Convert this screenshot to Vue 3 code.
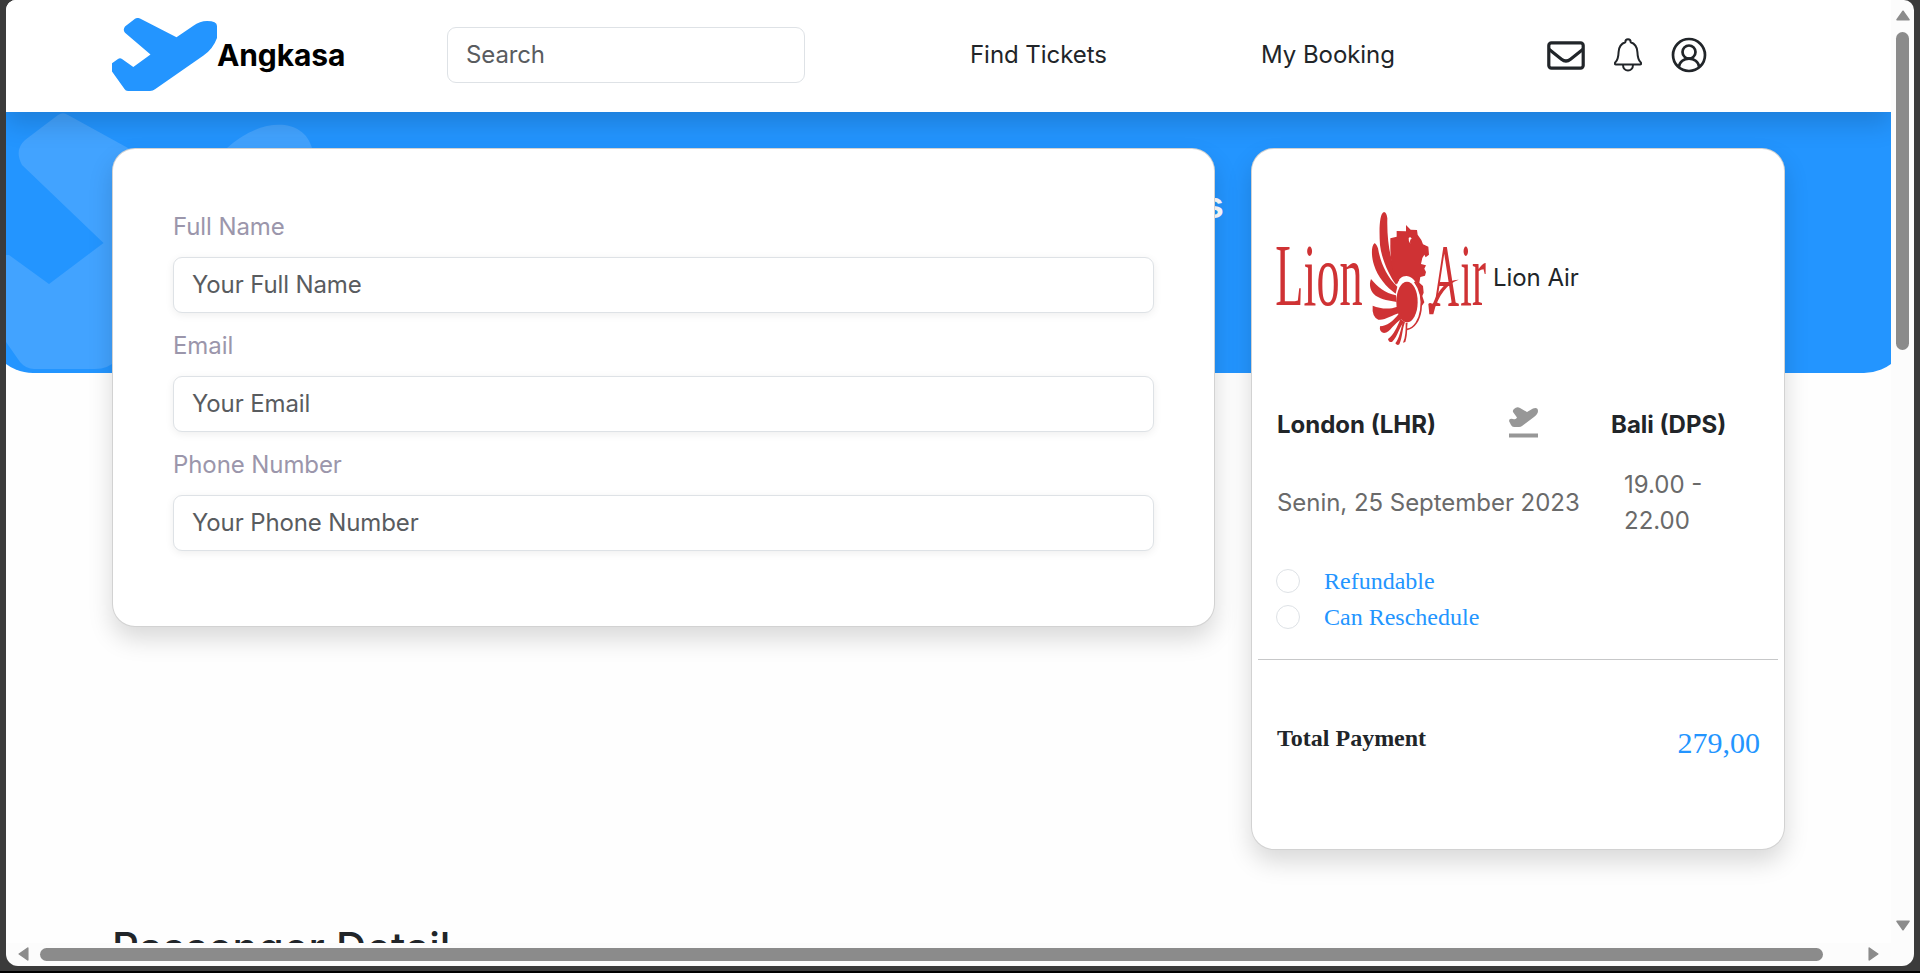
<script setup>
const links = ['Find Tickets', 'My Booking']
const fields = [
  { label: 'Full Name', hint: 'Your Full Name' },
  { label: 'Email', hint: 'Your Email' },
  { label: 'Phone Number', hint: 'Your Phone Number' }
]
const perks = ['Refundable', 'Can Reschedule']
</script>

<template>
  <div class="desktop">
    <div class="window">
      <div class="view">
        <nav class="navbar">
          <svg class="logo" viewBox="112 18 105 73">
            <path fill="#2395ff" d="M135 18.8Q137.7 17.2 140 18.6L176.5 37.3 193 26Q200 21 207 21 217 21 217 26V38Q213 49 203.5 55.5L155 89.3Q153 90.9 150 90.9H128Q125.5 90.9 124.5 89L112 71.5V63.3L118 59Q120 57.5 122 59L133.3 67 150.5 54.6 125 32.8Q122.5 30 125 26.5Z" />
          </svg>
          <span class="brand">Angkasa</span>
          <input class="control search" placeholder="Search" />
          <a v-for="l in links" :key="l" class="link">{{ l }}</a>
          <div class="icons">
            <svg class="mail" viewBox="0 0 38 29" fill="none" stroke="#212529" stroke-width="3.2">
              <rect x="1.8" y="1.8" width="34.4" height="25.4" rx="2.6" />
              <path d="M2 8.2 14.5 18.2Q19 21.8 23.5 18.2L36 8.2" />
            </svg>
            <svg class="bell" viewBox="0 0 28 34" fill="none" stroke="#212529" stroke-width="2" stroke-linejoin="round">
              <path d="M11.3 4.3C11.3 .2 16.7 .2 16.7 4.3 21.5 6 23.2 9.5 23.4 14 23.6 19.5 24.5 22.5 26.8 24.6 27.6 26 27 26.5 26 26.5H2C1 26.5 .4 26 1.2 24.6 3.5 22.5 4.4 19.5 4.6 14 4.8 9.5 6.5 6 11.3 4.3Z" />
              <path d="M9 26.8C9 34.4 19 34.4 19 26.8" />
            </svg>
            <svg class="user" viewBox="0 0 36 36" fill="none" stroke="#212529" stroke-width="2.7">
              <circle cx="18" cy="18" r="16" />
              <circle cx="18" cy="15" r="6.5" />
              <path d="M7.8 30.2C9 18.8 27 18.8 28.2 30.2" />
            </svg>
          </div>
        </nav>

        <div class="banner">
          <svg class="pattern" viewBox="0 0 340 261">
            <path fill="#42a3ff" d="M76 3Q81 -.5 86 3L146 36 210 60 245 36C280 4 322 6 330 36L332 80 137 247Q126 257 113 257H52Q44 257 38 250L24 230V143H27L67 172 121.500 131 40 53Q32 38 43 28Z" />
          </svg>
          <span class="banner-text">s</span>
        </div>

        <main class="content">
          <form class="card contact">
            <template v-for="f in fields" :key="f.label">
              <label class="label">{{ f.label }}</label>
              <input class="control field" :placeholder="f.hint" />
            </template>
          </form>

          <section class="card flight">
            <div class="airline">
              <svg class="lion" viewBox="288 225 633 450">
                <g fill="#cf3234" font-family="'Liberation Serif', serif" font-size="266">
                  <text x="286" y="525" textLength="262" lengthAdjust="spacingAndGlyphs">Lion</text>
                  <text x="755" y="525" textLength="82" lengthAdjust="spacingAndGlyphs">A</text>
                  <text x="841" y="525" textLength="77" lengthAdjust="spacingAndGlyphs">ir</text>
                  <path d="M745 522Q750 515 758 523C777 473 804 448 836 449 805 459 773 495 760 553H748Z" />
                  <path d="M612 246C598 250 597 300 600 345 605 390 630 440 648 464L658 450C636 405 620 350 622 265Q620 247 612 246Z" />
                  <path d="M583 340C573 350 574 380 582 405 592 440 620 472 647 491L652 470C620 440 602 400 594 355Q588 340 583 340Z" />
                  <path d="M573 447C566 465 571 485 587 497 605 509 630 512 650 516L648 496C615 490 592 470 573 447Z" />
                  <path d="M578 527Q575 560 595 569C615 572 635 555 660 549L652 530C625 540 600 535 578 527Z" />
                  <path d="M600 589Q597 606 612 609C632 607 640 580 666 567L656 552C640 573 620 588 600 589Z" />
                  <path d="M624 627Q626 638 636 636C655 617 657 592 672 576L662 567C650 592 642 615 624 627Z" />
                  <path d="M646 640Q652 648 658 643C668 620 666 600 675 576L669 574C662 600 658 625 646 640Z" />
                  <path d="M669 638 676 636C684 610 680 595 683 578L677 578C677 600 677 620 669 638Z" />
                  <path d="M631 325 650 320V303L678 304V285L692 299 711 300 713 314 724 330 729 343 745 350 747 374 737 382 733 374 727 384 723 402 738 406 733 416 738 426 735 437 721 441 718 458 729 468 731 488 727 498 733 517 724 530C724 480 706 438 679 438 665 438 655 447 652 462 638 430 630 385 631 343Z" />
                  <ellipse cx="681" cy="516" rx="32" ry="61" />
                </g>
                <path d="M704 455C738 500 727 590 681 598" fill="none" stroke="#cf3234" stroke-width="5" />
                <path d="M686 324Q691 319 695 326L691 329Q689 335 691 341 685 336 686 324Z" fill="#fff" />
              </svg>
              <span class="airline-name">Lion Air</span>
            </div>
            <div class="route">
              <b class="from">London (LHR)</b>
              <svg class="plane" viewBox="0 0 29 31" fill="#979797">
                <path d="M5 2Q8-1 11 1L18 5 24 1.500Q29 0 29 4 29 7 25 10L13 19Q12 20 10 20H5Q3 20 2 18L0 14Q0 11 4 12 7 13 8 10.500L4 5Q3.500 3 5 2Z" />
                <rect y="26.500" width="29" height="4" />
              </svg>
              <b>Bali (DPS)</b>
            </div>
            <div class="schedule">
              <span>Senin, 25 September 2023</span>
              <span class="time">19.00 -<br />22.00</span>
            </div>
            <div v-for="p in perks" :key="p" class="perk"><i class="radio"></i>{{ p }}</div>
            <hr class="rule" />
            <div class="total">
              <b>Total Payment</b>
              <span class="price">279,00</span>
            </div>
          </section>
        </main>
        <h2 class="heading">Passenger Detail</h2>
      </div>

      <div class="vbar">
        <svg class="arrow" viewBox="0 0 14 11"><path d="M7 1.200 13 9.800H1Z" /></svg>
        <div class="thumb-v"></div>
        <svg class="arrow down" viewBox="0 0 14 11"><path d="M7 9.800 13 1.200H1Z" /></svg>
      </div>
      <div class="hbar">
        <svg class="arrow-h" viewBox="0 0 11 14"><path d="M1.200 7 9.800 1V13Z" /></svg>
        <div class="thumb-h"></div>
        <svg class="arrow-h" viewBox="0 0 11 14"><path d="M9.800 7 1.200 1V13Z" /></svg>
      </div>
    </div>
  </div>
</template>

<style>
body { background: #3b3b3b; overflow: hidden; }
</style>

<style scoped>
* { box-sizing: border-box; }
svg { display: block; flex: none; }
.desktop {
  width: 1920px;
  height: 973px;
  padding: 0 6px;
  background: #3b3b3b;
  border-bottom: 2px solid #000;
  overflow: hidden;
  font: 24px/36px Inter, sans-serif;
  color: #212529;
}
.window {
  width: 1908px;
  height: 966px;
  display: grid;
  grid-template: 943px 23px / 1885px 23px;
  background: #fcfcfc;
  border-radius: 10px 10px 12px 12px;
  overflow: hidden;
}
.view { background: #fefefe; overflow: hidden; }
.navbar {
  position: relative;
  z-index: 1;
  height: 112px;
  padding-left: 106px;
  display: flex;
  align-items: center;
  background: #fff;
  box-shadow: 0 12px 24px rgba(0, 0, 0, .15);
}
.logo { width: 105px; height: 73px; margin-bottom: 3px; }
.brand { width: 230px; margin-bottom: 2px; font-size: 30px; font-weight: 700; letter-spacing: -.1px; color: #000; }
.control {
  display: block;
  height: 56px;
  padding: 0 18px 2px;
  border: 1px solid #dee2e6;
  border-radius: 9px;
  background: #fff;
  font: inherit;
  letter-spacing: -.12px;
  outline: 0;
}
.control::placeholder { color: #595c5f; opacity: 1; }
.search { width: 358px; margin: 0 165px 2px 0; flex: none; }
.link { width: 291px; flex: none; margin-bottom: 2px; letter-spacing: -.05px; }
.icons { display: flex; align-items: center; margin-bottom: 2px; }
.mail { width: 38px; height: 29px; margin-left: -5px; }
.bell { width: 28px; height: 34px; margin-left: 29px; }
.user { width: 36px; height: 36px; margin-left: 29px; }
.banner {
  position: relative;
  height: 261px;
  margin: 0 -18px;
  background: #2395ff;
  border-radius: 0 0 45px 45px;
  overflow: hidden;
}
.pattern { width: 340px; height: 261px; margin-left: -6px; }
.banner-text {
  position: absolute;
  left: 1216px;
  top: 75px;
  color: #fff;
  font-size: 36px;
  font-weight: 600;
}
.content {
  position: relative;
  z-index: 2;
  display: flex;
  align-items: flex-start;
  gap: 36px;
  margin-top: -225px;
  padding-left: 106px;
}
.card {
  background: #fff;
  border: 1px solid rgba(0, 0, 0, .175);
  border-radius: 23px;
  box-shadow: 0 12px 24px rgba(0, 0, 0, .15);
}
.contact { width: 1103px; height: 479px; padding: 60px 60px 0; }
.label { display: block; color: #9b96ab; height: 36px; margin-bottom: 12px; letter-spacing: -.09px; }
.field {
  width: 981px;
  margin-bottom: 15px;
  box-shadow: 0 2px 9px rgba(0, 0, 0, .07);
}
.flight { width: 534px; height: 702px; padding: 56px 6px 0; }
.airline { display: flex; align-items: center; padding-left: 18px; height: 150px; }
.lion { width: 211px; height: 150px; }
.airline-name { margin: 0 0 4px 6px; letter-spacing: -.05px; }
.route { display: flex; align-items: center; padding-left: 19px; height: 36px; margin-top: 52px; }
.from { width: 232px; }
.route b { font-weight: 700; letter-spacing: 0; }
.plane { width: 29px; height: 31px; margin: 0 73px 6px 0; }
.schedule {
  display: flex;
  align-items: center;
  padding-left: 19px;
  height: 72px;
  margin-top: 24px;
  color: #6a6a6a;
}
.schedule > span:first-child { width: 347px; white-space: nowrap; letter-spacing: -.04px; }
.perk {
  display: flex;
  align-items: center;
  height: 36px;
  padding-left: 18px;
  font-family: 'Liberation Serif', serif;
  color: #2395ff;
}
.schedule + .perk { margin-top: 24px; }
.radio { width: 24px; height: 24px; margin-right: 24px; border: 1px solid #dee2e6; border-radius: 50%; }
.rule { height: 1px; border: 0; margin: 24px 0 0; background: #c7c8c9; }
.total {
  display: flex;
  justify-content: space-between;
  padding: 60px 18px 0 19px;
  font-family: 'Liberation Serif', serif;
}
.price { font-size: 30px; line-height: 45px; color: #2395ff; }
.heading { margin: 73px 0 0 106px; font-size: 42px; line-height: 50px; font-weight: 500; }
.vbar { display: flex; flex-direction: column; align-items: center; padding-top: 10px; }
.arrow { width: 14px; height: 11px; }
.arrow path, .arrow-h path { fill: #8b8b8b; stroke: #8b8b8b; stroke-width: 1.500; stroke-linejoin: round; }
.thumb-v { width: 13px; height: 318px; margin-top: 11px; border-radius: 7px; background: #8b8b8b; }
.down { margin-top: 570px; }
.hbar { display: flex; align-items: center; padding: 0 0 1px 12px; grid-column: 1 / 3; }
.arrow-h { width: 11px; height: 14px; }
.thumb-h { width: 1783px; height: 13px; margin: 0 45px 0 11px; border-radius: 7px; background: #8b8b8b; }
</style>
